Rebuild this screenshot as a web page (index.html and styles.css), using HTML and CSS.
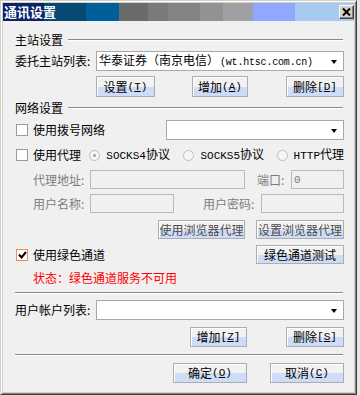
FILE: index.html
```html
<!DOCTYPE html>
<html lang="zh">
<head>
<meta charset="utf-8">
<title>通讯设置</title>
<link rel="stylesheet" href="styles.css">
</head>
<body>
<div class="window">
  <div class="titlebar">
    <span class="title">通讯设置</span>
    <span class="close"><svg width="9" height="8" viewBox="0 0 9 8"><path d="M1 0.5 L8 7.5 M8 0.5 L1 7.5" stroke="#000" stroke-width="2"/></svg></span>
  </div>
  <div class="content">
    <div class="group-head r1"><span>主站设置</span><i class="rule"></i></div>
    <div class="row r2">
      <span class="lbl w81">委托主站列表:</span>
      <div class="combo w248"><span class="val">华泰证券（南京电信）<span class="url">(wt.htsc.com.cn)</span></span><i class="arrow"></i></div>
    </div>
    <div class="row r3">
      <span class="btn b1">设置 <span class="m">(<u>T</u>)</span></span>
      <span class="btn b2">增加<span class="m">(<u>A</u>)</span></span>
      <span class="btn b3">删除<span class="m">[<u>D</u>]</span></span>
    </div>
    <div class="group-head r4"><span>网络设置</span><i class="rule"></i></div>
    <div class="row r5">
      <span class="check"><i class="cb"></i><span>使用拨号网络</span></span>
      <div class="combo w178 push"><span class="val"></span><i class="arrow"></i></div>
    </div>
    <div class="row r6">
      <span class="check wcheck"><i class="cb"></i><span>使用代理</span></span>
      <span class="radio rw1"><i class="rd on"></i><span><span class="m">SOCKS4</span>协议</span></span>
      <span class="radio rw2"><i class="rd"></i><span><span class="m">SOCKS5</span>协议</span></span>
      <span class="radio"><i class="rd"></i><span><span class="m">HTTP</span>代理</span></span>
    </div>
    <div class="row r7">
      <span class="lbl dis ind">代理地址:</span>
      <span class="input w155"></span>
      <span class="lbl dis port">端口:</span>
      <span class="input w53"><span class="m gray">0</span></span>
    </div>
    <div class="row r8">
      <span class="lbl dis ind">用户名称:</span>
      <span class="input w84"></span>
      <span class="lbl dis pwd">用户密码:</span>
      <span class="input w83"></span>
    </div>
    <div class="row r9 end">
      <span class="btn dbtn wb1">使用浏览器代理</span>
      <span class="btn dbtn wb2">设置浏览器代理</span>
    </div>
    <div class="row r10">
      <span class="check"><i class="cb checked"><svg width="9" height="8" viewBox="0 0 9 8"><path d="M1 3.5 L3.5 6.5 L8 1" fill="none" stroke="#000" stroke-width="2"/></svg></i><span>使用绿色通道</span></span>
      <span class="btn wb2 push">绿色通道测试</span>
    </div>
    <div class="status r11">状态：绿色通道服务不可用</div>
    <div class="sep r12"></div>
    <div class="row r13">
      <span class="lbl w81">用户帐户列表:</span>
      <div class="combo w248"><span class="val"></span><i class="arrow"></i></div>
    </div>
    <div class="row r14 end">
      <span class="btn wz">增加<span class="m">[<u>Z</u>]</span></span>
      <span class="btn ws">删除<span class="m">[<u>S</u>]</span></span>
    </div>
    <div class="sep r15"></div>
    <div class="row r16 end">
      <span class="btn wok">确定 <span class="m">(<u>O</u>)</span></span>
      <span class="btn wcancel">取消 <span class="m">(<u>C</u>)</span></span>
    </div>
  </div>
</div>
</body>
</html>
```

FILE: styles.css
```css
* { box-sizing: border-box; }
html, body { margin: 0; padding: 0; }
body {
  width: 360px;
  height: 395px;
  background: #e6e6e6;
  font-family: "Noto Sans CJK SC", "Liberation Sans", sans-serif;
  font-size: 12px;
  color: #000;
  overflow: hidden;
}
.window {
  width: 357px;
  height: 395px;
  background: #d4d0c8;
  border-style: solid;
  border-width: 1px;
  border-color: #d4d0c8 #404040 #404040 #d4d0c8;
  box-shadow: inset 1px 1px #ffffff, inset -1px -1px #808080;
  padding: 2px;
  display: flex;
  flex-direction: column;
}
.titlebar {
  height: 18px;
  flex: none;
  display: flex;
  align-items: center;
  background: linear-gradient(to right,
    #0a246a 0px, #0a246a 41px,
    #044a74 41px, #044a74 83px,
    #005f9a 83px, #005f9a 116px,
    #6b6b6b 116px, #6b6b6b 145px,
    #7b7b7b 145px, #7b7b7b 165px,
    #848484 165px, #848484 197px,
    #929292 197px, #929292 220px,
    #a0a0a4 220px, #a0a0a4 250px,
    #8fa9ff 250px, #8fa9ff 292px,
    #a6caf0 292px, #a6caf0 100%);
}
.title {
  color: #fff;
  font-weight: bold;
  font-size: 13px;
  line-height: 18px;
  padding-left: 1px;
}
.close {
  margin-left: auto;
  width: 15px;
  height: 14px;
  background: #d4d0c8;
  border-style: solid;
  border-width: 1px;
  border-color: #ffffff #404040 #404040 #ffffff;
  box-shadow: inset -1px -1px #808080;
  display: flex;
  align-items: center;
  justify-content: center;
}
.close svg { display: block; }
.content {
  flex: 1;
  background: #f0f0f0;
  padding: 0 10px 0 12px;
  display: flex;
  flex-direction: column;
}
.row {
  display: flex;
  align-items: center;
  flex: none;
}
.end { justify-content: flex-end; }
.push { margin-left: auto; }
.group-head {
  display: flex;
  align-items: center;
  height: 14px;
  line-height: 14px;
  flex: none;
}
.rule {
  flex: 1;
  margin-left: 5px;
  margin-right: 1px;
  border-top: 1px solid #8a8a8a;
  border-bottom: 1px solid #ffffff;
  height: 0;
}
.lbl { white-space: nowrap; line-height: 14px; }
.dis { color: #7d7d7d; }
.w81 { width: 81px; }
.ind { width: 75px; padding-left: 18px; }
.port { width: 34px; margin-left: 12px; }
.pwd { width: 58px; margin-left: 29px; }
.combo {
  height: 20px;
  background: #fff;
  border: 1px solid #a8a8a8;
  display: flex;
  align-items: center;
  padding-left: 2px;
}
.combo .val { flex: 1; white-space: nowrap; line-height: 14px; }
.url { font-family: "Liberation Mono", monospace; font-size: 10px; letter-spacing: -0.2px; margin-left: 1px; }
.arrow {
  width: 0; height: 0;
  border-left: 3.5px solid transparent;
  border-right: 3.5px solid transparent;
  border-top: 4px solid #000;
  margin-right: 6px;
  margin-top: 1px;
}
.w248 { width: 248px; }
.w178 { width: 178px; }
.input {
  height: 19px;
  background: #f0f0f0;
  border: 1px solid #b9b9b9;
  display: flex;
  align-items: center;
  padding-left: 2px;
}
.w155 { width: 155px; }
.w53 { width: 53px; }
.w84 { width: 84px; }
.w83 { width: 83px; }
.gray { color: #7d7d7d; }
.m { font-family: "Liberation Mono", monospace; font-size: 11px; }
u { text-decoration: underline; text-underline-offset: 1px; }
.btn {
  height: 20px;
  border: 1px solid #adadad;
  box-shadow: inset 1px 1px #ffffff;
  background: linear-gradient(to bottom, #f2f2f2 0, #f2f2f2 52%, #cfdcf8 52%, #cfdcf8 100%);
  display: flex;
  align-items: center;
  justify-content: center;
  white-space: nowrap;
  line-height: 14px;
}
.dbtn { color: #4a4a4a; }
.b1 { width: 59px; margin-left: 81px; height: 21px; }
.b2 { width: 56px; margin-left: 37px; height: 21px; }
.b3 { width: 58px; margin-left: 38px; height: 21px; }
.wb1 { width: 87px; height: 19px; }
.wb2 { width: 88px; height: 19px; margin-left: 11px; }
.r10 .wb2 { margin-left: auto; }
.wz { width: 57px; }
.ws { width: 58px; margin-left: 39px; }
.wok { width: 74px; }
.wcancel { width: 74px; margin-left: 23px; }
.check { display: flex; align-items: center; white-space: nowrap; line-height: 14px; }
.wcheck { width: 75px; }
.cb {
  width: 12px; height: 12px;
  margin-left: 1px; margin-right: 5px;
  background: #fff;
  border: 1px solid #9a9a9a;
  display: flex; align-items: center; justify-content: center;
}
.cb.checked { border-color: #f08c5a; }
.cb svg { display: block; }
.radio { display: flex; align-items: center; white-space: nowrap; line-height: 14px; }
.rw1 { width: 95px; }
.rw2 { width: 94px; }
.rd {
  width: 11px; height: 11px;
  border-radius: 50%;
  border: 1px solid #bdbdbd;
  background: #f6f6f6;
  margin-right: 6px;
  display: flex; align-items: center; justify-content: center;
}
.rd.on::after {
  content: "";
  width: 3px; height: 3px;
  border-radius: 50%;
  background: #a0a0a0;
}
.status { color: #ff0000; padding-left: 18px; height: 14px; line-height: 14px; flex: none; }
.sep {
  flex: none;
  height: 2px;
  margin-right: 1px;
  border-top: 1px solid #8a8a8a;
  border-bottom: 1px solid #ffffff;
}
.r1 { margin-top: 12px; }
.r2 { margin-top: 4px; height: 20px; }
.r3 { margin-top: 5px; height: 21px; }
.r4 { margin-top: 4px; }
.r5 { margin-top: 5px; height: 20px; }
.r6 { margin-top: 6px; height: 18px; }
.r7 { margin-top: 6px; height: 19px; }
.r8 { margin-top: 5px; height: 19px; }
.r9 { margin-top: 7px; height: 19px; }
.r10 { margin-top: 6px; height: 19px; }
.r11 { margin-top: 7px; }
.r12 { margin-top: 7px; }
.r13 { margin-top: 6px; height: 20px; }
.r14 { margin-top: 7px; height: 20px; }
.r15 { margin-top: 7px; }
.r16 { margin-top: 7px; height: 20px; }
```
